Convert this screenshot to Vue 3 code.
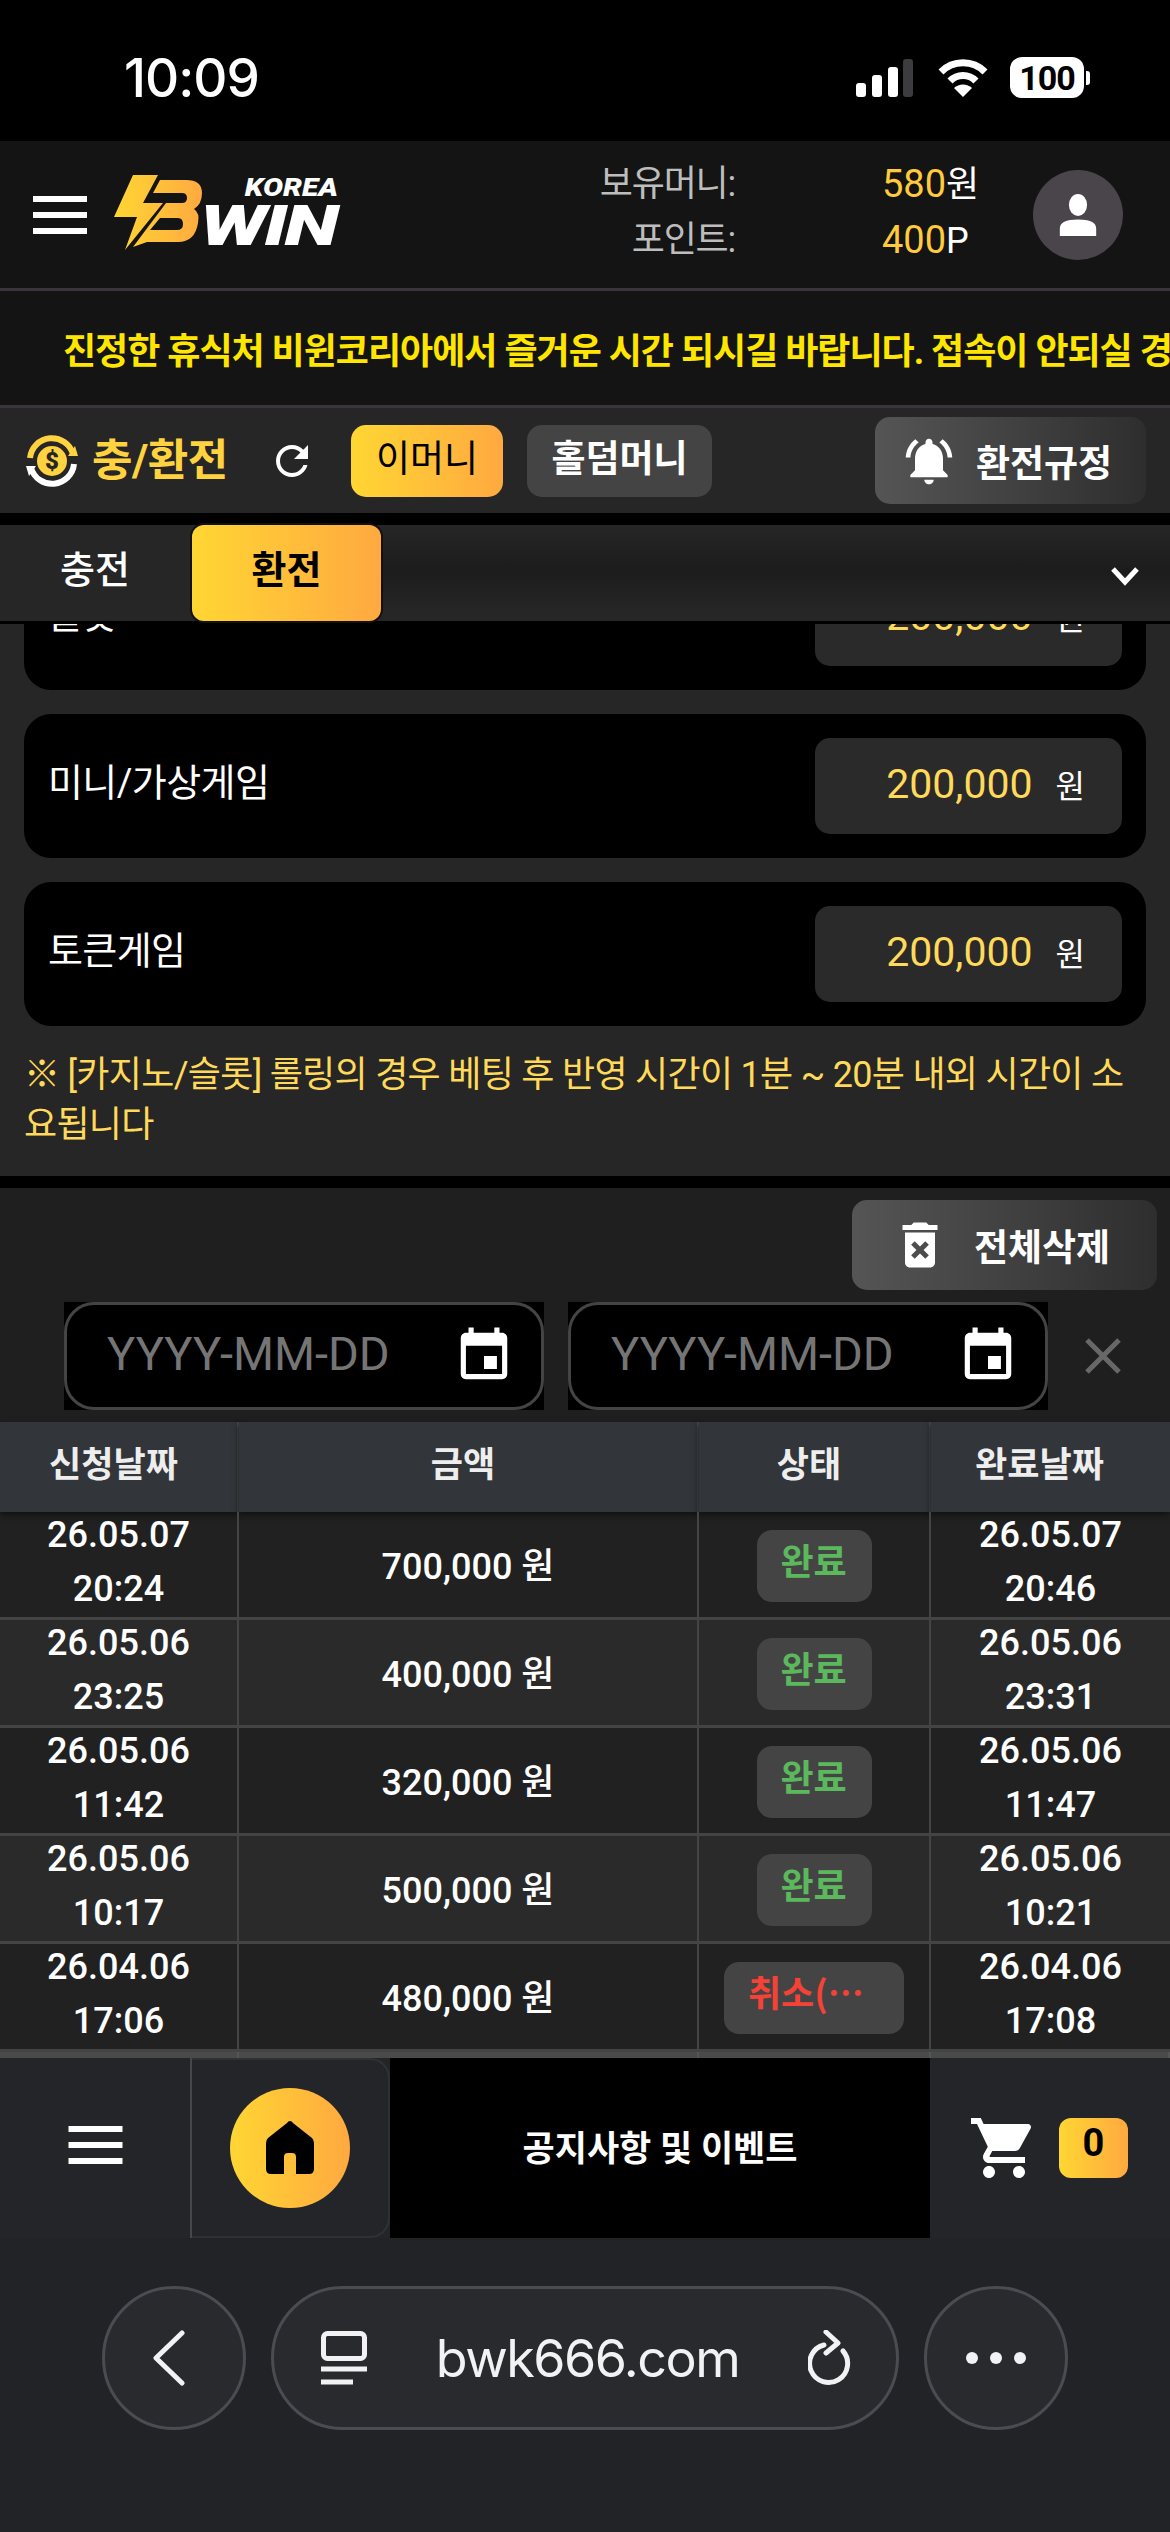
<template>
  <div class="page">
    <!-- iOS status bar -->
    <div class="status">
      <span class="clock">10:09</span>
      <div class="status-icons">
        <svg width="57" height="38" viewBox="0 0 57 38" fill="#fff">
          <rect x="0" y="24" width="10" height="14" rx="3" />
          <rect x="16" y="16" width="10" height="22" rx="3" />
          <rect x="32" y="8" width="10" height="30" rx="3" />
          <rect x="47" y="0" width="10" height="38" rx="3" fill="#3c3c3e" />
        </svg>
        <svg class="wifi" width="50" height="38" viewBox="0 0 50 38">
          <path d="M3 13 A31 31 0 0 1 47 13" fill="none" stroke="#fff" stroke-width="7" />
          <path d="M12 22 A18 18 0 0 1 38 22" fill="none" stroke="#fff" stroke-width="7" />
          <path d="M25 38 L16 29 A13 13 0 0 1 34 29 Z" fill="#fff" />
        </svg>
        <div class="battery"><span>100</span></div>
        <i class="battery-tip"></i>
      </div>
    </div>

    <!-- site header -->
    <header class="top">
      <svg class="burger" width="54" height="38" viewBox="0 0 54 38" fill="#fff">
        <rect y="0" width="54" height="6" /><rect y="16" width="54" height="6" /><rect y="32" width="54" height="6" />
      </svg>
      <div class="logo">
        <svg class="logo-mark" width="90" height="76" viewBox="0 0 90 76">
          <defs>
            <linearGradient id="lg" gradientUnits="userSpaceOnUse" x1="0" y1="0" x2="90" y2="0">
              <stop offset="0" stop-color="#ffd633" /><stop offset="1" stop-color="#ffa940" />
            </linearGradient>
          </defs>
          <path fill="url(#lg)" d="M19 0 H44 L29 28 H49 L11 75 L23 42 H0 Z" />
          <path fill="url(#lg)" fill-rule="evenodd" d="M46 5 H72 Q88 5 88 18 Q88 29 80 34 Q86 38 84 48 Q81 67 64 67 H33 L19 72 L52 28 H68 Q73 28 73 23 Q73 18 68 18 H39 Z M46 43 H64 Q69 43 69 49 Q69 55 63 55 H36 Z" />
        </svg>
        <div class="logo-words">
          <span class="korea">KOREA</span>
          <span class="win">WIN</span>
        </div>
      </div>
      <div class="balance">
        <div class="bal-row"><span class="bal-label">보유머니:</span><span class="bal-val"><b>580</b>원</span></div>
        <div class="bal-row"><span class="bal-label">포인트:</span><span class="bal-val"><b>400</b>P</span></div>
      </div>
      <div class="avatar">
        <svg width="40" height="42" viewBox="0 0 44 46" fill="#fff">
          <ellipse cx="22" cy="12" rx="10" ry="12" />
          <path d="M2 46 V38 Q2 28 22 28 Q42 28 42 38 V46 Z" />
        </svg>
      </div>
    </header>

    <div class="ticker">
      <span>진정한 휴식처 비윈코리아에서 즐거운 시간 되시길 바랍니다. 접속이 안되실 경우 고객센터로 문의 바랍니다.</span>
    </div>

    <!-- section title -->
    <div class="section">
      <svg class="coin" width="52" height="54" viewBox="0 0 52 54">
        <path d="M4 24 A22 22 0 0 1 47 20" fill="none" stroke="#ffd23f" stroke-width="6" />
        <path d="M48 30 A22 22 0 0 1 5 34" fill="none" stroke="#fff" stroke-width="6" />
        <path d="M0 32 L10 32 L3 42 Z" fill="#fff" />
        <path d="M52 22 L42 22 L49 12 Z" fill="#ffd23f" />
        <circle cx="26" cy="27" r="15" fill="#ffd23f" />
        <text x="26" y="35" text-anchor="middle" class="coin-s">$</text>
      </svg>
      <h2 class="section-title">충/환전</h2>
      <svg class="refresh" width="48" height="48" viewBox="0 0 24 24" fill="#fff">
        <path d="M17.65 6.35C16.2 4.9 14.21 4 12 4c-4.42 0-7.99 3.58-7.99 8s3.57 8 7.99 8c3.73 0 6.84-2.55 7.73-6h-2.08c-.82 2.33-3.04 4-5.65 4-3.31 0-6-2.69-6-6s2.69-6 6-6c1.66 0 3.14.69 4.22 1.78L13 11h7V4l-2.35 2.35z" />
      </svg>
      <button class="money on">이머니</button>
      <button class="money hold">홀덤머니</button>
      <button class="grey-btn rule-btn">
        <svg width="56" height="56" viewBox="0 0 24 24" fill="#fff">
          <path d="M7.58 4.08L6.15 2.65C3.75 4.48 2.17 7.3 2.03 10.5h2c.15-2.65 1.51-4.97 3.55-6.42zm12.39 6.42h2c-.15-3.2-1.73-6.02-4.12-7.85l-1.42 1.43c2.02 1.45 3.39 3.77 3.54 6.42zM18 11c0-3.07-1.64-5.64-4.5-6.32V4c0-.83-.67-1.5-1.5-1.5s-1.5.67-1.5 1.5v.68C7.63 5.36 6 7.92 6 11v5l-2 2v1h16v-1l-2-2v-5zm-6 11c.14 0 .27-.01.4-.04.65-.14 1.18-.58 1.44-1.18.1-.24.15-.5.15-.78h-4c.01 1.1.9 2 2.01 2z" />
        </svg>
        환전규정
      </button>
    </div>

    <div class="tabs">
      <div class="tab">충전</div>
      <div class="tab active">환전</div>
      <div class="tab-rest"></div>
      <svg class="chev" width="30" height="20" viewBox="0 0 30 20">
        <path d="M3 3 L15 16 L27 3" fill="none" stroke="#fff" stroke-width="5" />
      </svg>
    </div>

    <!-- scrolled content -->
    <main class="scroller">
      <div class="scroll-inner">
        <section class="limits">
          <div v-for="c in limits" :key="c" class="limit-card">
            <span class="limit-name">{{ c }}</span>
            <div class="limit-box"><b>200,000</b><span>원</span></div>
          </div>
          <p class="note">※ [카지노/슬롯] 롤링의 경우 베팅 후 반영 시간이 1분 ~ 20분 내외 시간이 소요됩니다</p>
        </section>

        <section class="history">
          <div class="hist-tools">
            <button class="grey-btn del-btn">
              <svg width="60" height="60" viewBox="0 0 24 24" fill="#fff">
                <path d="M6 19c0 1.1.9 2 2 2h8c1.1 0 2-.9 2-2V7H6v12zm2.46-7.12l1.41-1.41L12 12.59l2.12-2.12 1.41 1.41L13.41 14l2.12 2.12-1.41 1.41L12 15.41l-2.12 2.12-1.41-1.41L10.59 14l-2.13-2.12zM15.5 4l-1-1h-5l-1 1H5v2h14V4z" />
              </svg>
              전체삭제
            </button>
          </div>
          <div class="dates">
            <div v-for="n in 2" :key="n" class="date-wrap">
              <div class="date">
                <input placeholder="YYYY-MM-DD" />
                <svg width="62" height="62" viewBox="0 0 24 24" fill="#fff">
                  <path d="M17 12h-5v5h5v-5zM16 1v2H8V1H6v2H5c-1.11 0-1.99.9-1.99 2L3 19c0 1.1.89 2 2 2h14c1.1 0 2-.9 2-2V5c0-1.1-.9-2-2-2h-1V1h-2zm3 18H5V8h14v11z" />
                </svg>
              </div>
            </div>
            <svg class="clear" width="36" height="36" viewBox="0 0 36 36">
              <path d="M2 2 L34 34 M34 2 L2 34" stroke="#686868" stroke-width="5" />
            </svg>
          </div>

          <div class="tbl">
            <div class="tr head">
              <div class="th">신청날짜</div><div class="th">금액</div><div class="th">상태</div><div class="th">완료날짜</div>
            </div>
            <div v-for="r in rows" :key="r.from + r.fromTime" class="tr row">
              <div class="td when"><span>{{ r.from }}</span><span>{{ r.fromTime }}</span></div>
              <div class="td amount">{{ r.amount }} 원</div>
              <div class="td"><span class="state" :class="r.cancel ? 'bad' : 'ok'">{{ r.state }}</span></div>
              <div class="td when"><span>{{ r.to }}</span><span>{{ r.toTime }}</span></div>
            </div>
            <div class="tr tbl-end"><i></i><i></i><i></i><i></i></div>
          </div>
        </section>
      </div>
    </main>

    <!-- bottom nav -->
    <nav class="bottom">
      <div class="b-menu">
        <svg width="55" height="38" viewBox="0 0 54 38" fill="#fff">
          <rect y="0" width="54" height="6" /><rect y="16" width="54" height="6" /><rect y="32" width="54" height="6" />
        </svg>
      </div>
      <div class="b-home">
        <div class="home-dot">
          <svg width="48" height="54" viewBox="0 0 48 54" fill="#000">
            <path d="M24 0 Q26 0 27 2 L46 17 Q48 19 48 22 V48 Q48 53 43 53 H30 V36 Q30 32 26 32 H22 Q18 32 18 36 V53 H5 Q0 53 0 48 V22 Q0 19 2 17 L21 2 Q22 0 24 0 Z" />
          </svg>
        </div>
      </div>
      <div class="b-notice">공지사항 및 이벤트</div>
      <div class="b-cart">
        <svg width="72" height="72" viewBox="0 0 24 24" fill="#fff">
          <path d="M7 18c-1.1 0-1.99.9-1.99 2S5.9 22 7 22s2-.9 2-2-.9-2-2-2zM1 2v2h2l3.6 7.59-1.35 2.45c-.16.28-.25.61-.25.96 0 1.1.9 2 2 2h12v-2H7.42c-.14 0-.25-.11-.25-.25l.03-.12.9-1.63h7.45c.75 0 1.41-.41 1.75-1.03l3.58-6.49c.08-.14.12-.31.12-.48 0-.55-.45-1-1-1H5.21l-.94-2H1zm16 16c-1.1 0-1.99.9-1.99 2s.89 2 1.99 2 2-.9 2-2-.9-2-2-2z" />
        </svg>
        <span class="cart-count">0</span>
      </div>
    </nav>

    <!-- browser chrome -->
    <div class="browser">
      <div class="round">
        <svg width="36" height="56" viewBox="0 0 36 56">
          <path d="M31 3 L5 28 L31 53" fill="none" stroke="#f2f2f4" stroke-width="5" stroke-linecap="round" stroke-linejoin="round" />
        </svg>
      </div>
      <div class="url">
        <svg width="46" height="54" viewBox="0 0 46 54" fill="none" stroke="#f2f2f4" stroke-width="5">
          <rect x="2.5" y="2.5" width="41" height="25" rx="4" />
          <path d="M0 38 H46 M0 51 H32" />
        </svg>
        <span class="url-text">bwk666.com</span>
        <svg width="44" height="56" viewBox="0 0 44 56" fill="none" stroke="#f2f2f4" stroke-width="5" stroke-linecap="round" stroke-linejoin="round">
          <path d="M16 15 A19 19 0 1 0 35 21" />
          <path d="M18 2 L30 13 L18 23" />
        </svg>
      </div>
      <div class="round dots"><i></i><i></i><i></i></div>
    </div>
  </div>
</template>

<script setup>
const limits = ['슬롯', '미니/가상게임', '토큰게임']

const rows = [
  { from: '26.05.07', fromTime: '20:24', amount: '700,000', state: '완료', to: '26.05.07', toTime: '20:46' },
  { from: '26.05.06', fromTime: '23:25', amount: '400,000', state: '완료', to: '26.05.06', toTime: '23:31' },
  { from: '26.05.06', fromTime: '11:42', amount: '320,000', state: '완료', to: '26.05.06', toTime: '11:47' },
  { from: '26.05.06', fromTime: '10:17', amount: '500,000', state: '완료', to: '26.05.06', toTime: '10:21' },
  { from: '26.04.06', fromTime: '17:06', amount: '480,000', state: '취소(관리자)', to: '26.04.06', toTime: '17:08', cancel: true }
]
</script>

<style>
html, body { margin: 0; background: #000; }
</style>

<style scoped>
.page {
  width: 1170px;
  height: 2532px;
  display: flex;
  flex-direction: column;
  overflow: hidden;
  background: #000;
  color: #fff;
  font-family: Roboto, "Noto Sans CJK KR", sans-serif;
}
button { font-family: inherit; border: none; padding: 0; }

.status { height: 141px; flex: none; display: flex; align-items: center; justify-content: space-between; padding: 14px 80px 0 124px; box-sizing: border-box; background: #000; }
.clock { font-size: 53px; font-weight: 500; font-family: Inter, Roboto, sans-serif; letter-spacing: -1px; }
.status-icons { display: flex; align-items: center; }
.wifi { margin-left: 25px; }
.battery { margin-left: 22px; width: 74px; height: 41px; background: #fff; border-radius: 12px; display: flex; align-items: center; justify-content: center; color: #000; font-size: 34px; font-weight: 700; letter-spacing: -1px; }
.battery-tip { width: 4px; height: 14px; margin-left: 2px; background: #fff; border-radius: 0 3px 3px 0; }

.top { height: 150px; flex: none; box-sizing: border-box; border-bottom: 3px solid #3a353c; background: #141414; display: flex; align-items: center; padding: 0 47px 0 33px; }
.burger { flex: none; }
.logo { display: flex; margin-left: 27px; align-items: flex-start; height: 76px; margin-top: -3px; }
.logo-words { display: flex; flex-direction: column; align-items: flex-end; width: 136px; margin-left: 1px; font-style: italic; font-weight: 900; font-family: Roboto, sans-serif; }
.korea { font-size: 26px; line-height: 24px; transform: scaleX(1.15); transform-origin: right center; margin-right: 3px; }
.win { font-size: 56px; line-height: 44px; margin-top: 5px; margin-right: 5px; letter-spacing: -2px; transform: scaleX(1.42); transform-origin: right center; }
.balance { margin-left: auto; margin-right: 51px; display: flex; flex-direction: column; gap: 11px; margin-top: -4px; }
.bal-row { display: flex; font-size: 36px; line-height: 44px; }
.bal-label { width: 160px; text-align: right; color: #bdbdbd; letter-spacing: -1.2px; }
.bal-val { width: 100px; margin-left: 147px; color: #fff; white-space: nowrap; }
.bal-val b { color: #ffcb3d; font-weight: 400; font-size: 38px; }
.avatar { width: 90px; height: 90px; border-radius: 50%; background: #49454b; display: flex; align-items: center; justify-content: center; flex: none; }

.ticker { height: 117px; flex: none; box-sizing: border-box; border-bottom: 3px solid #3a353c; background: #141414; padding-left: 63px; display: flex; align-items: center; overflow: hidden; white-space: nowrap; color: #ffe600; font-size: 36px; font-weight: 700; letter-spacing: -1px; }

.section { height: 105px; flex: none; background: #262626; display: flex; align-items: center; padding: 0 24px 0 26px; box-sizing: border-box; }
.coin { flex: none; }
.coin-s { font-size: 24px; font-weight: 900; fill: #262626; font-family: Roboto, sans-serif; }
.section-title { margin: 0 0 8px 14px; font-size: 44px; font-weight: 700; color: #ffd23f; white-space: nowrap; letter-spacing: -.5px; width: 176px; }
.refresh { margin-left: 0; flex: none; }
.money { height: 72px; margin-left: 24px; width: 152px; padding: 0 0 10px; border-radius: 15px; background: #444; color: #fff; font-size: 37px; font-weight: 700; }
.refresh + .money { margin-left: 35px; }
.money.hold { width: 185px; }
.money.on { background: linear-gradient(90deg, #ffd633, #ffa940); color: #000; font-weight: 400; }
.grey-btn { display: flex; align-items: center; background: linear-gradient(90deg, #555, #2e2e2e); border-radius: 15px; color: #fff; font-size: 37px; font-weight: 700; white-space: nowrap; }
.rule-btn { margin-left: auto; width: 271px; height: 87px; padding-left: 26px; gap: 19px; }

.tabs { height: 99px; flex: none; box-sizing: border-box; border-bottom: 3px solid #000; margin-top: 12px; display: flex; align-items: stretch; background: #262626; position: relative; }
.tab { width: 190px; display: flex; align-items: center; justify-content: center; font-size: 38px; font-weight: 500; padding-bottom: 14px; box-sizing: border-box; }
.tab.active { width: 189px; margin-left: 2px; border-radius: 12px; background: linear-gradient(90deg, #ffd633, #ffa940); color: #000; font-weight: 700; box-shadow: 0 0 0 2px #111; }
.tab-rest { flex: 1; margin-left: 2px; background: linear-gradient(180deg, #262626 0%, #1c1c1c 48%, #262626 90%); }
.chev { position: absolute; right: 30px; top: 41px; }

.scroller { flex: 1; min-height: 0; overflow: hidden; background: #262626; }
.scroll-inner { margin-top: -78px; }
.limits { background: #262626; padding: 0 24px; display: flex; flex-direction: column; gap: 24px; }
.limit-card { height: 144px; box-sizing: border-box; background: #000; border-radius: 27px; display: flex; align-items: center; justify-content: space-between; padding: 24px; }
.limit-name { font-size: 38px; margin-bottom: 14px; letter-spacing: -.6px; }
.limit-box { width: 307px; height: 96px; box-sizing: border-box; background: #2a2a2a; border-radius: 15px; display: flex; align-items: center; justify-content: flex-end; padding: 0 37px 5px 0; }
.limit-box b { font-weight: 400; font-size: 41px; color: #ffd95a; }
.limit-box span { font-size: 32px; margin-left: 23px; }
.note { margin: 0 0 26px; font-size: 36px; line-height: 50px; color: #ffd95a; word-break: break-all; letter-spacing: -.7px; }

.history { border-top: 12px solid #000; background: #1f1f1f; }
.hist-tools { display: flex; justify-content: flex-end; padding: 12px 13px 12px 0; }
.del-btn { width: 305px; height: 90px; padding-left: 38px; gap: 24px; }
.dates { display: flex; align-items: center; padding-left: 64px; gap: 24px; height: 108px; }
.date-wrap { width: 480px; height: 108px; background: #000; }
.date { height: 100%; box-sizing: border-box; border: 3px solid #444; border-radius: 30px; display: flex; align-items: center; padding: 0 26px 0 40px; }
.date input { flex: 1; min-width: 0; background: none; border: none; outline: none; padding: 0 0 6px; font-family: Roboto, sans-serif; font-size: 47px; color: #fff; }
.date input::placeholder { color: #757575; opacity: 1; }
.clear { margin-left: 13px; flex: none; }

.tbl { margin-top: 12px; }
.tr { display: grid; grid-template-columns: 239px 460px 232px 239px; }
.th { height: 90px; box-sizing: border-box; background: #32363a; color: #eee; font-size: 35px; font-weight: 700; padding: 0 10px 12px 0; border-right: 2px solid #44484c; display: flex; align-items: center; justify-content: center; box-shadow: 0 3px 6px #111; }
.th:last-child { padding-right: 22px; }
.th:last-child, .td:last-child { border-right: none; }
.row { height: 108px; box-sizing: border-box; border-bottom: 3px solid #444; grid-template-rows: 105px; }
.row:nth-child(even) { background: #212121; }
.row:nth-child(odd) { background: #2a2a2a; }
.td { display: flex; align-items: center; justify-content: center; border-right: 2px solid #444; min-width: 0; height: 105px; box-sizing: border-box; }
.when { flex-direction: column; font-size: 36px; line-height: 54px; font-weight: 500; padding-bottom: 5px; }
.amount { font-size: 36px; font-weight: 500; padding-bottom: 3px; }
.state { display: block; box-sizing: border-box; height: 72px; line-height: 58px; padding: 0 24px; border-radius: 15px; background: #444; font-family: "Noto Sans CJK SC", sans-serif; font-size: 36px; font-weight: 700; white-space: nowrap; overflow: hidden; text-overflow: ellipsis; }
.state.ok { color: #5cb85c; width: 115px; margin-top: 3px; }
.state.bad { color: #f44336; width: 180px; margin-top: 3px; }
.tbl-end { height: 6px; background: #4a4a4a; }
.tbl-end i { border-right: 2px solid #555; }

.bottom { height: 180px; flex: none; background: #232528; display: flex; align-items: stretch; }
.b-menu { width: 192px; display: flex; align-items: center; justify-content: center; border-right: 2px solid #44474b; padding-bottom: 6px; box-sizing: border-box; }
.b-home { width: 198px; box-sizing: border-box; border: 2px solid #2f3135; border-left: none; border-top-right-radius: 20px; border-bottom-right-radius: 20px; display: flex; align-items: center; justify-content: center; }
.home-dot { width: 120px; height: 120px; border-radius: 50%; background: linear-gradient(90deg, #ffd633, #ffa940); display: flex; align-items: center; justify-content: center; }
.b-notice { width: 540px; background: #000; display: flex; align-items: center; justify-content: center; font-size: 35px; font-weight: 700; padding-bottom: 6px; box-sizing: border-box; }
.b-cart { flex: 1; display: flex; align-items: center; padding-left: 38px; gap: 19px; }
.cart-count { width: 69px; height: 60px; border-radius: 12px; background: linear-gradient(90deg, #ffd633, #ffa940); color: #000; font-size: 38px; font-weight: 700; display: flex; align-items: center; justify-content: center; padding-bottom: 10px; box-sizing: border-box; }

.browser { height: 294px; flex: none; background: #222326; display: flex; align-items: flex-start; justify-content: center; gap: 25px; padding-top: 48px; box-sizing: border-box; }
.round { width: 144px; height: 144px; box-sizing: border-box; border-radius: 50%; border: 3px solid #4b4c52; background: #292a2d; display: flex; align-items: center; justify-content: center; padding-right: 10px; }
.round.dots { gap: 12px; padding-right: 0; }
.round.dots i { width: 12px; height: 12px; border-radius: 50%; background: #f2f2f4; }
.url { width: 628px; height: 144px; box-sizing: border-box; border-radius: 72px; border: 3px solid #4b4c52; background: #292a2d; display: flex; align-items: center; padding: 0 44px 0 47px; }
.url-text { flex: 1; text-align: center; font-size: 52px; font-family: Inter, Roboto, sans-serif; color: #f2f2f4; letter-spacing: -1.5px; }
</style>
